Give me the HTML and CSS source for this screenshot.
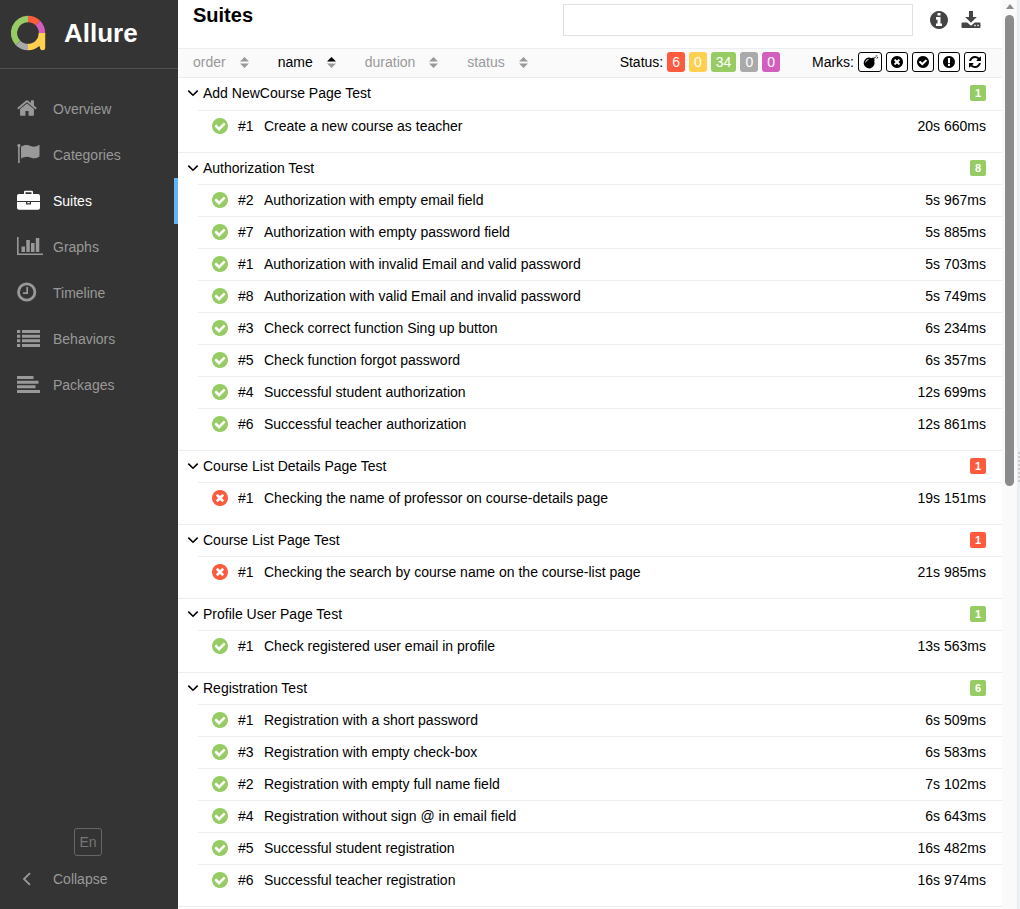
FILE: index.html
```html
<!DOCTYPE html>
<html lang="en">
<head>
<meta charset="utf-8">
<title>Allure Report</title>
<link rel="stylesheet" href="styles.css">
</head>
<body>
<svg class="defs" aria-hidden="true">
  <symbol id="ok" viewBox="128 128 1536 1536"><path d="M1412 734q0-28-18-46l-91-90q-19-19-45-19t-45 19l-408 407-226-226q-19-19-45-19t-45 19l-91 90q-18 18-18 46 0 27 18 45l362 362q19 19 45 19 27 0 46-19l543-543q18-18 18-45zm252 162q0 209-103 385.5t-279.5 279.5-385.5 103-385.5-103-279.5-279.5-103-385.5 103-385.5 279.5-279.5 385.5-103 385.5 103 279.5 279.5 103 385.5z"/></symbol>
  <symbol id="fail" viewBox="128 128 1536 1536"><path d="M1277 1122q0-26-19-45l-181-181 181-181q19-19 19-45 0-27-19-46l-90-90q-19-18-46-18-26 0-45 18l-181 181-181-181q-19-18-45-18-27 0-46 18l-90 90q-19 19-19 46 0 26 19 45l181 181-181 181q-19 19-19 45 0 27 19 46l90 90q19 18 46 18 26 0 45-18l181-181 181 181q19 18 45 18 27 0 46-18l90-90q19-19 19-46zm387-226q0 209-103 385.5t-279.5 279.5-385.5 103-385.5-103-279.5-279.5-103-385.5 103-385.5 279.5-279.5 385.5-103 385.5 103 279.5 279.5 103 385.5z"/></symbol>
  <symbol id="info" viewBox="128 128 1536 1536"><path d="M1152 1376v-160q0-14-9-23t-23-9h-96v-512q0-14-9-23t-23-9h-320q-14 0-23 9t-9 23v160q0 14 9 23t23 9h96v320h-96q-14 0-23 9t-9 23v160q0 14 9 23t23 9h448q14 0 23-9t9-23zm-128-896v-160q0-14-9-23t-23-9h-192q-14 0-23 9t-9 23v160q0 14 9 23t23 9h192q14 0 23-9t9-23zm640 416q0 209-103 385.5t-279.5 279.5-385.5 103-385.5-103-279.5-279.5-103-385.5 103-385.5 279.5-279.5 385.5-103 385.5 103 279.5 279.5 103 385.5z"/></symbol>
  <symbol id="warn" viewBox="128 128 1536 1536"><path d="M896 128q209 0 385.5 103t279.5 279.5 103 385.5-103 385.5-279.5 279.5-385.5 103-385.5-103-279.5-279.5-103-385.5 103-385.5 279.5-279.5 385.5-103zm128 1247v-190q0-14-9-23.5t-22-9.5h-192q-13 0-23 10t-10 23v190q0 13 10 23t23 10h192q13 0 22-9.5t9-23.5zm-2-344l18-621q0-12-10-18-10-8-24-8h-220q-14 0-24 8-10 6-10 18l17 621q0 10 10 17.5t24 7.5h185q14 0 23.500-7.500t10.500-17.500z"/></symbol>
  <symbol id="retry" viewBox="128 128 1536 1536"><path d="M1639 1056q0 5-1 7-64 268-268 434.5t-478 166.5q-146 0-282.5-55t-243.5-157l-129 129q-19 19-45 19t-45-19-19-45v-448q0-26 19-45t45-19h448q26 0 45 19t19 45-19 45l-137 137q71 66 161 102t187 36q134 0 250-65t186-179q11-17 53-117 8-23 30-23h192q13 0 22.5 9.5t9.5 22.5zm25-800v448q0 26-19 45t-45 19h-448q-26 0-45-19t-19-45 19-45l138-138q-148-137-349-137-134 0-250 65t-186 179q-11 17-53 117-8 23-30 23h-199q-13 0-22.5-9.5t-9.5-22.5v-7q65-268 270-434.5t480-166.5q146 0 284 55.5t245 156.5l130-129q19-19 45-19t45 19 19 45z"/></symbol>
  <symbol id="bomb" viewBox="0 0 15 14"><path fill-rule="evenodd" d="M5.800 2.600a5.400 5.400 0 0 1 2.600.6l.8-.8.9.8.6-.6 1 1-.6.6.8.9-.8.8A5.400 5.400 0 1 1 5.800 2.600zM2.300 7.600h.7A3 3 0 0 1 5.600 5v-.7A3.700 3.700 0 0 0 2.300 7.600z"/><path d="M11 3.200q.7-1.500 1.900-.9M13.200.2v1M14.400.8l-.6.7M15 2.500h-1M14.200 4l-.5-.6" fill="none" stroke="currentColor" stroke-width=".8"/></symbol>
  <symbol id="sort" viewBox="0 0 9 11"><path d="M4.500 0 9 4.500H0z"/><path class="down" d="M0 6.500h9L4.500 11z"/></symbol>
  <symbol id="chev" viewBox="0 0 12 8"><path d="M1.300 1.600 6 6.200l4.700-4.600" fill="none" stroke="currentColor" stroke-width="1.600"/></symbol>
</svg>
<div class="app">
  <aside class="side">
    <a class="brand" href="#">
      <svg class="logo line" viewBox="0 0 36 36" stroke-width="6.400" aria-hidden="true">
        <path stroke="#97cc64" d="M8.100 27.900A14 14 0 0 1 18 4"/>
        <path stroke="#fd5a3e" d="M18 4a14 14 0 0 1 9.900 4.100"/>
        <path stroke="#d35ebe" d="M27.900 8.100A14 14 0 0 1 32 18"/>
        <path stroke="#aaa" d="M18 32a14 14 0 0 1-9.900-4.100"/>
        <path stroke="#ffd050" d="M32 18a14 14 0 0 1-14 14"/>
        <path fill="#ffd050" d="M28.800 18h6.400v14.600a2.600 2.600 0 0 1-5.200 0l-1.600-3.600z"/>
      </svg>
      <span>Allure</span>
    </a>
    <nav class="nav">
      <a href="#"><svg width="20" height="22" viewBox="0 0 1664 1792"><path d="M1408 992v480q0 26-19 45t-45 19h-384v-384h-256v384h-384q-26 0-45-19t-19-45v-480q0-1 .5-3t.5-3l575-474 575 474q1 2 1 6zm223-69l-62 74q-8 9-21 11h-3q-13 0-21-7l-692-577-692 577q-12 8-24 7-13-2-21-11l-62-74q-8-10-7-23.5t11-21.5l719-599q32-26 76-26t76 26l244 204v-195q0-14 9-23t23-9h192q14 0 23 9t9 23v408l219 182q10 8 11 21.5t-7 23.5z"/></svg><span>Overview</span></a>
      <a href="#"><svg width="23" height="20" viewBox="0 0 23 20"><path d="M1.100.2a1.500 1.500 0 0 1 1.600 2.700V19H1.100V2.900A1.500 1.500 0 0 1 1.100.2zM4 2.700C7 1 10 .4 13.500 2c3 1.300 5.500.8 9-1.200v11.600c-3 2-6 2.500-9 1-3.500-1.500-6.300-.6-9.500 1.100z"/></svg><span>Categories</span></a>
      <a href="#" class="on" aria-current="page"><svg width="23" height="21" viewBox="0 0 23 21"><path fill-rule="evenodd" d="M7 4V2q0-1.200 1.200-1.200h6.600Q16 .8 16 2v2h5q2 0 2 2v5H0V6q0-2 2-2zM8.500 2.300V4h6V2.300zM0 12h9v2.500h5V12h9v6q0 1.800-2 1.800H2q-2 0-2-1.800zM10.300 12h2.500v1.300h-2.500z"/></svg><span>Suites</span></a>
      <a href="#"><svg width="26" height="20" viewBox="0 0 26 20"><path d="M0 1h1.600v16.500H26V19H0zM4.500 10.500H8V16H4.500zM9.300 4h3.500v12H9.300zM14 7h3.500v9H14zM18.800 2h3.500v14h-3.500z"/></svg><span>Graphs</span></a>
      <a href="#"><svg class="line" width="20" height="20" viewBox="0 0 20 20"><circle cx="9.700" cy="10" r="8.200" stroke-width="2.800"/><path d="M10.200 5v6.200H6" stroke-width="1.700"/></svg><span>Timeline</span></a>
      <a href="#"><svg width="23" height="20" viewBox="0 0 23 20"><path d="M0 2h3.200v3H0zM5 2h18v3H5zM0 6.700h3.200v3H0zM5 6.700h18v3H5zM0 11.300h3.200v3H0zM5 11.300h18v3H5zM0 16h3.200v3H0zM5 16h18v3H5z"/></svg><span>Behaviors</span></a>
      <a href="#"><svg width="23" height="20" viewBox="0 0 23 20"><path d="M0 2h16.500v3H0zM0 6.700h21.500v3H0zM0 11.300h18.500v3H0zM0 16h23v3H0z"/></svg><span>Packages</span></a>
    </nav>
    <div class="foot">
      <button class="lang" type="button">En</button>
      <button class="collapse" type="button"><svg class="line" width="20" height="14" viewBox="0 0 20 14" stroke-width="1.800"><path d="M13 1.200 7 7l6 5.800"/></svg><span>Collapse</span></button>
    </div>
  </aside>
  <main class="main">
    <header class="head">
      <h1>Suites</h1>
      <input class="search" type="search" aria-label="Search">
      <button class="tool" type="button" aria-label="Information"><svg width="18" height="18"><use href="#info"/></svg></button>
      <button class="tool" type="button" aria-label="Download CSV"><svg width="20" height="20" viewBox="0 0 20 20"><path d="M8 1h4v6h3.800L10 12.800 4.200 7H8z"/><path fill-rule="evenodd" d="M1.500 12.500h4.700L10 15.700l3.800-3.200h4.700q1 0 1 1V17q0 1-1 1h-17q-1 0-1-1v-3.500q0-1 1-1zM13.300 14.800v1.400h1.400v-1.400zM16.300 14.800v1.400h1.400v-1.400z"/></svg></button>
    </header>
    <div class="bar">
      <div class="sorts">
        <button type="button">order<svg width="9" height="11"><use href="#sort"/></svg></button>
        <button type="button" class="on">name<svg width="9" height="11"><use href="#sort"/></svg></button>
        <button type="button">duration<svg width="9" height="11"><use href="#sort"/></svg></button>
        <button type="button">status<svg width="9" height="11"><use href="#sort"/></svg></button>
      </div>
      <div class="filter stat">
        <span>Status:</span>
        <button type="button" class="red">6</button><button type="button" class="yellow">0</button><button type="button" class="green">34</button><button type="button" class="gray">0</button><button type="button" class="pink">0</button>
      </div>
      <div class="filter marks">
        <span>Marks:</span>
        <button type="button" aria-label="Flaky"><svg width="15" height="14"><use href="#bomb"/></svg></button>
        <button type="button" aria-label="New failed"><svg width="12" height="12"><use href="#fail"/></svg></button>
        <button type="button" aria-label="New passed"><svg width="12" height="12"><use href="#ok"/></svg></button>
        <button type="button" aria-label="New broken"><svg width="12" height="12"><use href="#warn"/></svg></button>
        <button type="button" aria-label="Retries"><svg width="12" height="12"><use href="#retry"/></svg></button>
      </div>
    </div>
    <div class="tree" id="tree"></div>
  </main>
  <div class="scroll" aria-hidden="true"><i class="up"></i><i class="thumb"></i></div>
  <div class="gutter" aria-hidden="true"><i></i></div>
</div>
<script src="app.js"></script>
</body>
</html>
```
FILE: app.js
```js
const suites = [
  ["Add NewCourse Page Test", "ok", [[1, "Create a new course as teacher", "20s 660ms"]]],
  ["Authorization Test", "ok", [
    [2, "Authorization with empty email field", "5s 967ms"],
    [7, "Authorization with empty password field", "5s 885ms"],
    [1, "Authorization with invalid Email and valid password", "5s 703ms"],
    [8, "Authorization with valid Email and invalid password", "5s 749ms"],
    [3, "Check correct function Sing up button", "6s 234ms"],
    [5, "Check function forgot password", "6s 357ms"],
    [4, "Successful student authorization", "12s 699ms"],
    [6, "Successful teacher authorization", "12s 861ms"]]],
  ["Course List Details Page Test", "fail", [[1, "Checking the name of professor on course-details page", "19s 151ms"]]],
  ["Course List Page Test", "fail", [[1, "Checking the search by course name on the course-list page", "21s 985ms"]]],
  ["Profile User Page Test", "ok", [[1, "Check registered user email in profile", "13s 563ms"]]],
  ["Registration Test", "ok", [
    [1, "Registration with a short password", "6s 509ms"],
    [3, "Registration with empty check-box", "6s 583ms"],
    [2, "Registration with empty full name field", "7s 102ms"],
    [4, "Registration without sign @ in email field", "6s 643ms"],
    [5, "Successful student registration", "16s 482ms"],
    [6, "Successful teacher registration", "16s 974ms"]]]
];

document.getElementById("tree").innerHTML = suites.map(([name, state, tests]) => `
  <section class="group">
    <button type="button" class="suite" aria-expanded="true">
      <svg width="12" height="8"><use href="#chev"/></svg>
      <span class="name">${name}</span>
      <span class="count ${state}">${tests.length}</span>
    </button>
    ${tests.map(([n, title, time]) => `
    <a class="test" href="#">
      <svg class="${state}" width="16" height="16"><use href="#${state}"/></svg>
      <span class="num">#${n}</span>
      <span class="name">${title}</span>
      <span>${time}</span>
    </a>`).join("")}
  </section>`).join("");
```
FILE: styles.css
```css
* { box-sizing: border-box; }
body {
  margin: 0;
  background: #fff;
  color: #000;
  font: 14px/20px "Liberation Sans", Arial, sans-serif;
}
button {
  margin: 0;
  padding: 0;
  border: 0;
  background: none;
  color: inherit;
  font: inherit;
  cursor: pointer;
}
a { color: inherit; text-decoration: none; }
svg { display: block; flex: none; fill: currentColor; }
svg.line { fill: none; stroke: currentColor; }
.defs { position: absolute; width: 0; height: 0; }

.app {
  display: grid;
  grid-template-columns: 178px 1fr 15px 3px;
  height: 100vh;
  overflow: hidden;
}

/* Sidebar */
.side {
  display: flex;
  flex-direction: column;
  background: #343434;
  color: #999;
}
.brand {
  display: flex;
  align-items: center;
  gap: 18px;
  height: 69px;
  padding: 0 10px 3px;
  border-bottom: 1px solid #505050;
  color: #fff;
  font-size: 26px;
  font-weight: bold;
}
.brand svg.logo { width: 36px; height: 36px; stroke: none; }
.nav { padding-top: 17px; }
.nav a {
  display: grid;
  grid-template-columns: 36px 1fr;
  align-items: center;
  height: 46px;
  padding-left: 17px;
}
.nav svg { margin-bottom: 2px; }
.nav .on { border-right: 4px solid #64b5f6; color: #fff; }
.foot { margin-top: auto; padding-bottom: 20px; }
.lang {
  display: block;
  width: 28px;
  height: 28px;
  margin: 0 auto 13px 74px;
  border: 1px solid #666;
  border-radius: 3px;
  color: #777;
}
.collapse {
  display: grid;
  grid-template-columns: 36px 1fr;
  align-items: center;
  width: 100%;
  padding-left: 17px;
  text-align: left;
}

/* Header */
.main { display: flex; flex-direction: column; min-width: 0; overflow: hidden; }
.head {
  display: flex;
  flex: none;
  align-items: flex-start;
  height: 48px;
  padding: 4px 21px 0 15px;
}
h1 { margin: 0 auto 0 0; font-size: 20px; line-height: 22px; }
.search {
  width: 350px;
  height: 32px;
  margin-right: 17px;
  padding: 0 8px;
  border: 1px solid #e0e0e0;
  background: #fff;
  font: inherit;
}
.tool { display: flex; align-items: center; height: 32px; color: #444; }
.tool + .tool { margin-left: 13px; }

/* Sorting and filters */
.bar {
  display: flex;
  flex: none;
  align-items: center;
  height: 30px;
  padding: 0 16px 2px 15px;
  border-top: 1px solid #eceff1;
  border-bottom: 1px solid #eceff1;
  background: #fafafa;
}
.sorts { display: flex; gap: 29px; margin-right: auto; color: #999; }
.sorts button { display: flex; align-items: center; gap: 14px; }
.sorts .on { color: #000; }
.down { fill: #999; }
.filter { display: flex; align-items: center; gap: 4px; }
.filter button { height: 20px; border-radius: 3px; }
.stat { margin-right: 32px; }
.stat button { padding: 0 5px; color: #fff; }
.red, .count.fail { background: #fd5a3e; }
.yellow { background: #ffd050; }
.green, .count.ok { background: #97cc64; }
.gray { background: #aaa; }
.pink { background: #d35ebe; }
.marks button {
  display: flex;
  align-items: center;
  padding: 0 4px;
  border: 1px solid #000;
  background: #fff;
}
.marks button:first-of-type { padding: 0 3px 0 4px; }

/* Suite tree */
.tree { border-bottom: 1px solid #eceff1; }
.group { padding-bottom: 10px; }
.suite {
  display: flex;
  align-items: center;
  gap: 4px;
  width: 100%;
  height: 32px;
  padding: 0 16px 1px 9px;
  border-top: 1px solid #eceff1;
  text-align: left;
}
.group:first-child .suite { padding-bottom: 3px; border-color: transparent; }
.name { flex: 1; }
.count {
  width: 16px;
  height: 16px;
  border-radius: 2px;
  color: #fff;
  font-size: 11px;
  font-weight: bold;
  line-height: 16px;
  text-align: center;
}
.test {
  display: flex;
  align-items: center;
  height: 32px;
  margin-left: 20px;
  padding: 0 16px 1px 14px;
  border-top: 1px solid #eceff1;
}
.num { width: 26px; margin-left: 10px; }
svg.ok { color: #97cc64; }
svg.fail { color: #fd5a3e; }

/* Scrollbar and pane splitter */
.scroll {
  display: flex;
  flex-direction: column;
  align-items: center;
  padding-top: 4px;
  background: #fafafa;
}
.up {
  border: 4px solid transparent;
  border-top: 0;
  border-bottom: 5px solid #8b8b8b;
}
.thumb {
  width: 9px;
  height: 52%;
  margin-top: 6px;
  border-radius: 5px;
  background: #8b8b8b;
}
.gutter { display: flex; align-items: center; background: #eceff1; }
.gutter i {
  width: 2px;
  height: 30px;
  margin: 24px 0 0 1px;
  background: repeating-linear-gradient(#ccc 0 2px, transparent 2px 4px);
}
```
